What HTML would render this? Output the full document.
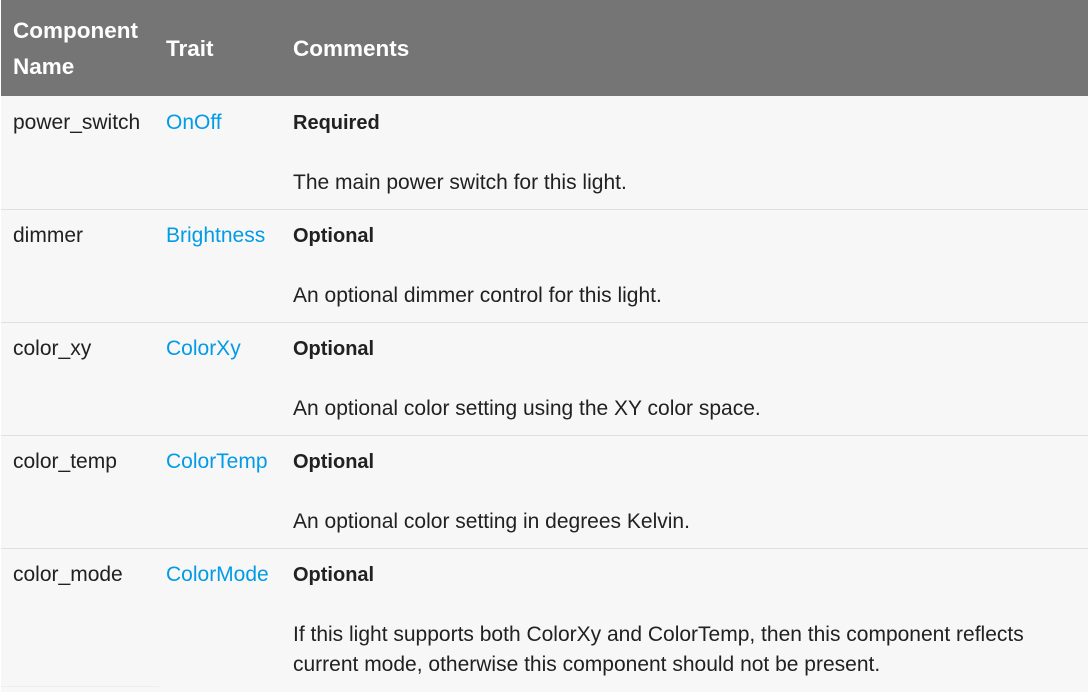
<!DOCTYPE html><html><head><style>
body{margin:0;width:1088px;height:692px;overflow:hidden;background:#fff;font-family:"Liberation Sans",sans-serif;font-size:21px;color:#212121}
.wrap{position:absolute;left:1px;top:0;width:1087px;height:692px;background:#f7f7f7}
.hd{position:absolute;left:0;top:0;width:1087px;height:96px;background:#757575;color:#fff;font-weight:bold;font-size:22.5px}
.t{position:absolute;white-space:nowrap;line-height:36px}
.row{position:absolute;left:0;width:1087px;border-top:1px solid #e0e0e0}
a{color:#039be5;text-decoration:none}
b{font-weight:bold;font-size:20px}
</style></head><body><div class="wrap">
<div class="hd">
<div class="t" style="left:12px;top:13px">Component<br>Name</div>
<div class="t" style="left:165px;top:31px">Trait</div>
<div class="t" style="left:292px;top:31px">Comments</div>
</div>
<div class="row" style="top:96px;height:113px;border-top:none">
<div class="t" style="left:12px;top:9px">power_switch</div>
<div class="t" style="left:165px;top:9px"><a>OnOff</a></div>
<div class="t" style="left:292px;top:9px"><b>Required</b></div>
<div class="t" style="left:292px;top:69px">The main power switch for this light.</div></div>
<div class="row" style="top:209px;height:113px">
<div class="t" style="left:12px;top:8px">dimmer</div>
<div class="t" style="left:165px;top:8px"><a>Brightness</a></div>
<div class="t" style="left:292px;top:8px"><b>Optional</b></div>
<div class="t" style="left:292px;top:68px">An optional dimmer control for this light.</div></div>
<div class="row" style="top:322px;height:113px">
<div class="t" style="left:12px;top:8px">color_xy</div>
<div class="t" style="left:165px;top:8px"><a>ColorXy</a></div>
<div class="t" style="left:292px;top:8px"><b>Optional</b></div>
<div class="t" style="left:292px;top:68px">An optional color setting using the XY color space.</div></div>
<div class="row" style="top:435px;height:113px">
<div class="t" style="left:12px;top:8px">color_temp</div>
<div class="t" style="left:165px;top:8px"><a>ColorTemp</a></div>
<div class="t" style="left:292px;top:8px"><b>Optional</b></div>
<div class="t" style="left:292px;top:68px">An optional color setting in degrees Kelvin.</div></div>
<div class="row" style="top:548px;height:140px">
<div class="t" style="left:12px;top:8px">color_mode</div>
<div class="t" style="left:165px;top:8px"><a>ColorMode</a></div>
<div class="t" style="left:292px;top:8px"><b>Optional</b></div>
<div class="t" style="left:292px;top:71px;line-height:30px">If this light supports both ColorXy and ColorTemp, then this component reflects<br>current mode, otherwise this component should not be present.</div></div>
<div style="position:absolute;left:0;top:686px;width:158px;height:1px;background:#eee"></div>
</div></body></html>
